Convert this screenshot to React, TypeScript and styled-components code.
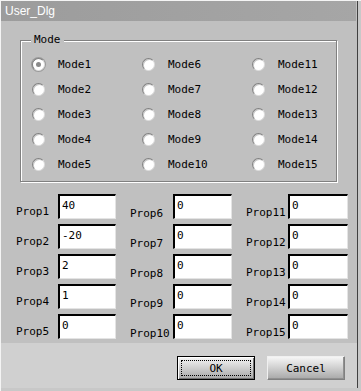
import React from "react";
import styled, { createGlobalStyle } from "styled-components";

const Global = createGlobalStyle`
  html, body { margin: 0; padding: 0; background: #c0c0c0; }
  * { box-sizing: border-box; }
`;

const Window = styled.div`
  width: 361px;
  height: 391px;
  background: #c0c0c0;
  display: flex;
  flex-direction: column;
  box-shadow: inset 1px 1px 0 #f4f4f4, inset -3px -3px 0 #c8c8c8, inset -4px -4px 0 #404040;
  font-family: "DejaVu Sans Mono", "Liberation Mono", monospace;
  font-size: 11px;
  color: #000;
`;

const TitleBar = styled.div`
  margin: 1px 5px 0 1px;
  height: 20px;
  background: linear-gradient(90deg, #9c9c9c, #a6a6a6);
  color: #fff;
  font-family: "Liberation Sans", Arial, sans-serif;
  font-size: 12px;
  display: flex;
  align-items: center;
  padding-left: 4px;
`;

const Group = styled.div`
  position: relative;
  margin: 19px 24px 0 20px;
  height: 142px;
  border: 1px solid #808080;
  box-shadow: inset 1px 1px 0 #fff, 1px 1px 0 #fff;
  padding: 11px 0 0 11px;
`;

const Legend = styled.span`
  position: absolute;
  left: 10px;
  top: -8px;
  padding: 0 3px;
  background: #c0c0c0;
  line-height: 14px;
`;

const RadioGrid = styled.div`
  display: grid;
  grid-template-columns: repeat(3, 110px);
  grid-auto-flow: column;
  grid-template-rows: repeat(5, 25px);
`;

const RadioItem = styled.label`
  display: flex;
  align-items: center;
  gap: 13px;
`;

const RadioCircle = styled.span<{ $checked?: boolean }>`
  width: 13px;
  height: 13px;
  border-radius: 50%;
  background: #fff;
  border: 1px solid;
  border-color: #808080 #dcdcdc #dcdcdc #808080;
  box-shadow: ${(p) => (p.$checked ? "0 0 0 1px #9a9a9a" : "inset 1px 1px 0 #c8c8c8")};
  display: flex;
  align-items: center;
  justify-content: center;
  &::after {
    content: "";
    width: 5px;
    height: 5px;
    border-radius: 50%;
    background: ${(p) => (p.$checked ? "#8a8a8a" : "transparent")};
  }
`;

const PropGrid = styled.div`
  margin: 12px 0 0 16px;
  display: grid;
  grid-template-columns: 100px 102px 102px;
  grid-auto-flow: column;
  grid-template-rows: repeat(5, 25px);
  column-gap: 14px;
  row-gap: 5px;
`;

const PropField = styled.div`
  display: flex;
  align-items: flex-end;
`;

const PropLabel = styled.span<{ $w: number; $drop: number }>`
  width: ${(p) => p.$w}px;
  margin-bottom: ${(p) => p.$drop}px;
  line-height: 14px;
`;

const PropInput = styled.div`
  flex: 1;
  height: 25px;
  background: #fff;
  border-top: 2px solid #000;
  border-left: 2px solid #000;
  border-right: 1px solid #e4e4e4;
  border-bottom: 1px solid #e4e4e4;
  padding: 3px 0 0 2px;
  line-height: 14px;
`;

const Footer = styled.div`
  margin: 4px 4px 3px 1px;
  flex: 1;
  background: #d0d0d0;
  display: flex;
  justify-content: flex-end;
  align-items: flex-start;
  gap: 12px;
  padding: 13px 12px 0 0;
`;

const Button = styled.button<{ $default?: boolean }>`
  width: 78px;
  height: 24px;
  font-family: "DejaVu Sans Mono", "Liberation Mono", monospace;
  font-size: 11px;
  color: #000;
  background: linear-gradient(#f6f6f6, #a8a8a8);
  border: 1px solid ${(p) => (p.$default ? "#000" : "#808080")};
  border-top-color: ${(p) => (p.$default ? "#000" : "#f0f0f0")};
  border-left-color: ${(p) => (p.$default ? "#000" : "#f0f0f0")};
  box-shadow: ${(p) => (p.$default ? "inset 1px 1px 0 #fff, inset -1px -1px 0 #707070" : "inset -1px -1px 0 #909090")};
  padding: 3px;
  display: flex;
`;

const Focus = styled.span<{ $on?: boolean }>`
  flex: 1;
  display: flex;
  align-items: center;
  justify-content: center;
  border: 1px dotted ${(p) => (p.$on ? "#000" : "transparent")};
`;

const modes = Array.from({ length: 15 }, (_, i) => `Mode${i + 1}`);
const values = ["40", "-20", "2", "1", "0", "0", "0", "0", "0", "0", "0", "0", "0", "0", "0"];
const labelW = [42, 43, 42];
const labelDrop = [0, -2, -1];

export default function App() {
  return (
    <>
      <Global />
      <Window>
        <TitleBar>User_Dlg</TitleBar>
        <Group>
          <Legend>Mode</Legend>
          <RadioGrid>
            {modes.map((m, i) => (
              <RadioItem key={m}>
                <RadioCircle $checked={i === 0} />
                {m}
              </RadioItem>
            ))}
          </RadioGrid>
        </Group>
        <PropGrid>
          {values.map((v, i) => {
            const col = Math.floor(i / 5);
            return (
              <PropField key={i}>
                <PropLabel $w={labelW[col]} $drop={labelDrop[col]}>
                  Prop{i + 1}
                </PropLabel>
                <PropInput>{v}</PropInput>
              </PropField>
            );
          })}
        </PropGrid>
        <Footer>
          <Button $default>
            <Focus $on>OK</Focus>
          </Button>
          <Button>
            <Focus>Cancel</Focus>
          </Button>
        </Footer>
      </Window>
    </>
  );
}
